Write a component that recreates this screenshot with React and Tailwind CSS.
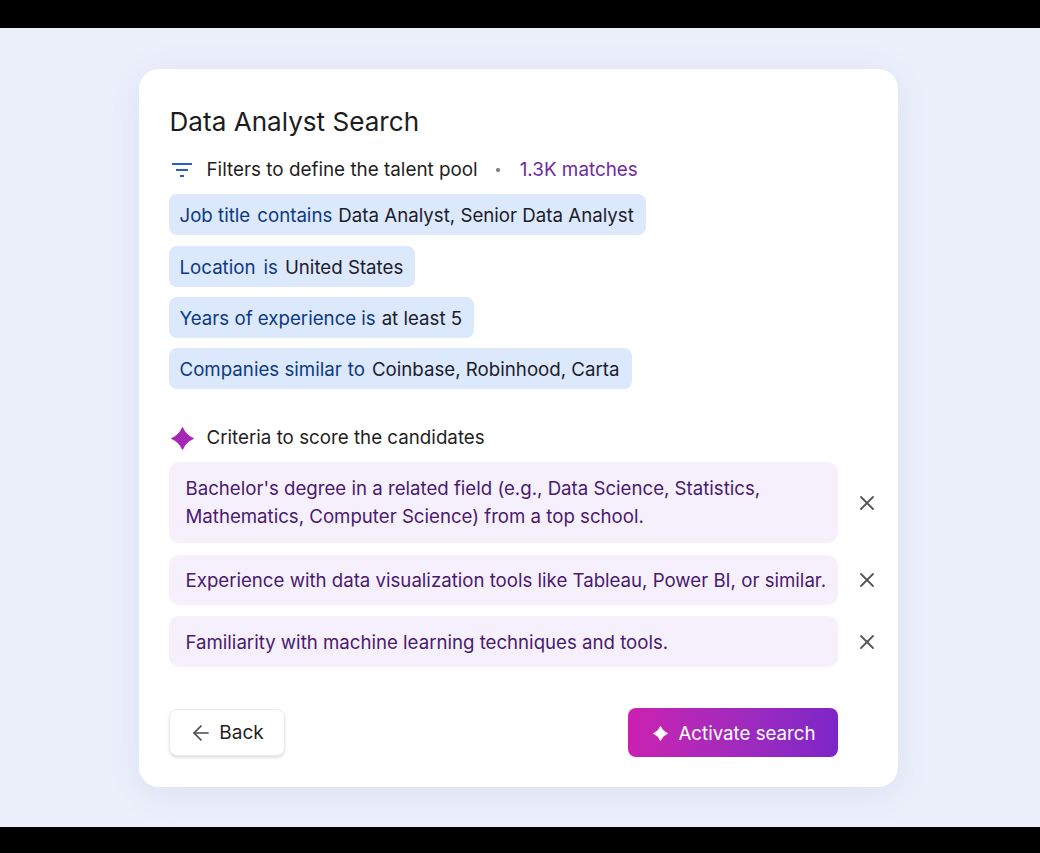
import React from 'react';
import { ArrowLeft, X } from 'lucide-react';

const filters = [
    { label: 'Job title', verb: 'contains', value: 'Data Analyst, Senior Data Analyst', labelGap: 'mr-[7px]', verbGap: 'mr-[6px]' },
    { label: 'Location', verb: 'is', value: 'United States', labelGap: 'mr-[8px]', verbGap: 'mr-[7px]' },
    { label: 'Years of experience', verb: 'is', value: 'at least 5', labelGap: 'mr-[5px]', verbGap: 'mr-[6px]' },
    { label: 'Companies similar', verb: 'to', value: 'Coinbase, Robinhood, Carta', labelGap: 'mr-[6px]', verbGap: 'mr-[7px]' },
];

const criteria = [
    { text: "Bachelor's degree in a related field (e.g., Data Science, Statistics, Mathematics, Computer Science) from a top school.", h: 'h-[81px] pb-[2px]' },
    { text: 'Experience with data visualization tools like Tableau, Power BI, or similar.', h: 'h-[50px]' },
    { text: 'Familiarity with machine learning techniques and tools.', h: 'h-[51px]' },
];

const SPARKLE = 'M12 0.5Q15.4 8.6 23.5 12Q15.4 15.4 12 23.5Q8.6 15.4 0.5 12Q8.6 8.6 12 0.5Z';

export default function App() {
    return (
        <div className="flex h-[853px] w-full flex-col bg-black font-['Inter',sans-serif]">
            <div className="h-[28px] shrink-0 bg-black" />
            <main className="flex h-[799px] shrink-0 justify-center bg-[#ecf0fb] pt-[41px]">
                <div className="ml-[-4px] h-[718px] w-[759px] rounded-[20px] bg-white pl-[30px] pt-[36px] shadow-[0_6px_36px_rgba(80,90,160,0.1)]">
                    <h1 className="h-[34px] pl-px text-[26.1px] leading-[34px] text-[#1c1c1e]">Data Analyst Search</h1>

                    <div className="mt-[16px] flex h-[30px] items-center text-[18.85px] text-[#1f1f23]">
                        <svg className="ml-[3px] mr-[15px] h-[20px] w-[20px]" viewBox="0 0 20 20" fill="none" stroke="#2361c4" strokeWidth="2">
                            <path d="M0 4H20M4 10H16M8 16H12" />
                        </svg>
                        <span>Filters to define the talent pool</span>
                        <span className="ml-[18px] mr-[20px] h-[4px] w-[4px] rounded-full bg-[#77777f]" />
                        <span className="text-[#6f2aa3]">1.3K matches</span>
                    </div>

                    <div className="mt-[9px] flex flex-col items-start gap-[10px]">
                        {filters.map((f) => (
                            <div key={f.label} className="flex h-[41px] items-center rounded-[8px] bg-[#dce8fb] pl-[11px] pr-[12px] pt-[4px] text-[18.7px] text-[#1c1c2a] first:mb-px">
                                <span className={`text-[#0d3a80] ${f.labelGap}`}>{f.label}</span>
                                <span className={`text-[#0d3a80] ${f.verbGap}`}>{f.verb}</span>
                                <span>{f.value}</span>
                            </div>
                        ))}
                    </div>

                    <div className="mt-[34px] flex h-[30px] items-center text-[18.75px] text-[#1f1f23]">
                        <svg className="ml-[2px] mr-[13px] h-[23px] w-[23px]" viewBox="0 0 24 24" fill="#a726b5" stroke="#a726b5" strokeLinejoin="round">
                            <path d={SPARKLE} />
                        </svg>
                        <span>Criteria to score the candidates</span>
                    </div>

                    <div className="mt-[9px] flex flex-col gap-[11.6px]">
                        {criteria.map((c) => (
                            <div key={c.text} className="flex items-center">
                                <div className={`flex w-[669px] items-center rounded-[10px] bg-[#f6f0fc] pl-[17px] pr-[10px] text-[18.65px] leading-[28px] text-[#491a6e] ${c.h}`}>
                                    {c.text}
                                </div>
                                <X className="ml-[17px] h-[24px] w-[24px] text-[#55555c]" strokeWidth={1.8} />
                            </div>
                        ))}
                    </div>

                    <div className="mt-[41px] flex w-[669px] items-center justify-between">
                        <button className="flex h-[47px] w-[116px] items-center justify-center gap-[6px] rounded-[8px] border border-[#ebebee] bg-white pt-px text-[19px] text-[#1f1f23] shadow-[0_2px_3px_rgba(0,0,0,0.12)]">
                            <ArrowLeft className="h-[24px] w-[24px] text-[#4a4a50]" strokeWidth={1.7} />
                            Back
                        </button>
                        <button className="flex h-[49px] w-[210px] items-center justify-center gap-[10px] rounded-[8px] bg-gradient-to-r from-[#cb1fb0] to-[#7d25c8] pl-[4px] pt-[2px] text-[18.7px] text-white">
                            <svg className="h-[15px] w-[15px]" viewBox="0 0 24 24" fill="white" stroke="white" strokeLinejoin="round">
                                <path d={SPARKLE} />
                            </svg>
                            Activate search
                        </button>
                    </div>
                </div>
            </main>
            <div className="h-[26px] shrink-0 bg-black" />
        </div>
    );
}
